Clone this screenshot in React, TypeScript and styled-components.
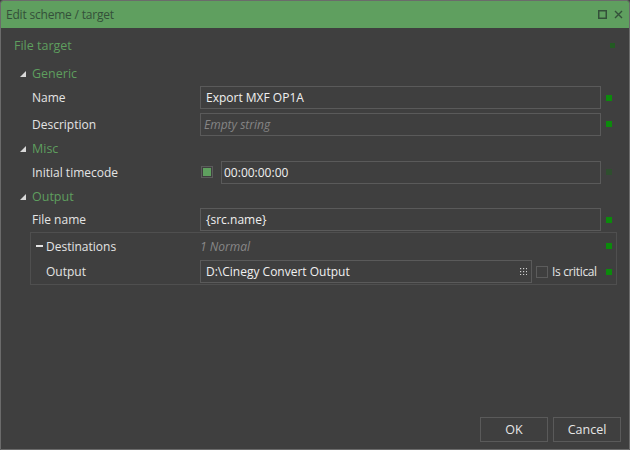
import React from "react";
import styled, { createGlobalStyle } from "styled-components";

const Global = createGlobalStyle`
  html, body { margin: 0; padding: 0; background: #3f3f3f; }
  * { box-sizing: border-box; }
  body { font-family: "Open Sans", "Noto Sans", sans-serif; font-size: 12px; }
`;

const Window = styled.div`
  width: 630px;
  height: 450px;
  border: 1px solid #6b6b6b;
  border-radius: 3px 3px 0 0;
  display: flex;
  flex-direction: column;
  overflow: hidden;
  background: #3f3f3f;
`;

const TitleBar = styled.div`
  height: 27px;
  flex: none;
  background: #5f9f5f;
  display: flex;
  align-items: center;
  justify-content: space-between;
  padding: 0 6px 0 5px;
`;

const Title = styled.span`
  color: #34503a;
  font-size: 12px;
  letter-spacing: -0.2px;
`;

const TitleIcons = styled.div`
  display: flex;
  align-items: center;
  gap: 7px;
`;

const Body = styled.div`
  flex: 1;
  display: flex;
  flex-direction: column;
  padding: 6px 12px 7px 13px;
`;

const Content = styled.div`
  flex: 1;
  display: flex;
  flex-direction: column;
`;

const SectionHeader = styled.div`
  height: 22px;
  display: flex;
  align-items: center;
  justify-content: space-between;
  color: #5e9e5e;
  font-size: 12.5px;
  margin-bottom: 6px;
`;

const Category = styled.div<{ $h?: number }>`
  height: ${(p) => p.$h ?? 22}px;
  display: flex;
  align-items: center;
  padding-left: 6px;
  gap: 6px;
  color: #5e9e5e;
  font-size: 12.5px;
`;

const Triangle = styled.span`
  width: 0;
  height: 0;
  border-left: 6px solid transparent;
  border-bottom: 6px solid #d8d8d8;
  margin-top: 1px;
`;

const PropRow = styled.div<{ $label: number; $pad: number; $h?: number }>`
  height: ${(p) => p.$h ?? 26}px;
  display: grid;
  grid-template-columns: ${(p) => p.$label}px 1fr ${(p) => 16 - (p.$pad === 15 ? 1 : 0)}px;
  align-items: center;
  padding-left: ${(p) => p.$pad}px;
`;

const Label = styled.span`
  color: #e4e4e4;
  font-size: 12px;
  display: flex;
  align-items: center;
`;

const Minus = styled.span`
  width: 7px;
  height: 2px;
  background: #e4e4e4;
  margin-left: -10px;
  margin-right: 3px;
`;

const Value = styled.div`
  display: flex;
  align-items: center;
  gap: 4px;
  min-width: 0;
`;

const Input = styled.div<{ $pad?: number; $placeholder?: boolean }>`
  flex: 1;
  height: 23px;
  border: 1px solid #5a5a5a;
  display: flex;
  align-items: center;
  justify-content: space-between;
  padding: 0 4px 0 ${(p) => p.$pad ?? 5}px;
  color: ${(p) => (p.$placeholder ? "#858585" : "#f0f0f0")};
  font-style: ${(p) => (p.$placeholder ? "italic" : "normal")};
  font-size: 12px;
  white-space: nowrap;
`;

const Hint = styled.span`
  color: #888;
  font-style: italic;
  font-size: 12px;
`;

const CheckBox = styled.span<{ $checked?: boolean }>`
  width: 12px;
  height: 12px;
  flex: none;
  border: 1px solid #5c5c5c;
  display: flex;
  align-items: center;
  justify-content: center;
  &::after {
    content: "";
    width: 8px;
    height: 8px;
    background: ${(p) => (p.$checked ? "#5fa05f" : "transparent")};
  }
`;

const CheckLabel = styled.span`
  color: #e4e4e4;
  font-size: 12px;
  letter-spacing: -0.35px;
  white-space: nowrap;
  flex: none;
  width: 49px;
`;

const Marker = styled.span<{ $tone: "on" | "dim" | "faint" }>`
  justify-self: center;
  width: ${(p) => (p.$tone === "faint" ? 5 : 6)}px;
  height: ${(p) => (p.$tone === "faint" ? 5 : 6)}px;
  background: ${(p) =>
    p.$tone === "on" ? "#0c8a0c" : p.$tone === "dim" ? "#2f4e2f" : "#235a23"};
`;

const Group = styled.div`
  margin-left: 16px;
  border: 1px solid #4f4f4f;
`;

const Footer = styled.div`
  display: flex;
  justify-content: flex-end;
  gap: 5px;
  margin-right: -4px;
`;

const Button = styled.button`
  width: 68px;
  height: 25px;
  background: #3f3f3f;
  border: 1px solid #5a5a5a;
  color: #e6e6e6;
  font-family: inherit;
  font-size: 12.5px;
  padding: 0;
`;

const GridDots = () => (
  <svg width="7" height="7" viewBox="0 0 7 7">
    {[0, 3, 6].flatMap((y) =>
      [0, 3, 6].map((x) => (
        <rect key={`${x}-${y}`} x={x} y={y} width="1.2" height="1.2" fill="#cfcfcf" />
      ))
    )}
  </svg>
);

export default function App() {
  return (
    <>
      <Global />
      <Window>
        <TitleBar>
          <Title>Edit scheme / target</Title>
          <TitleIcons>
            <svg width="9" height="9" viewBox="0 0 9 9">
              <rect x="0.75" y="0.75" width="7.5" height="7.5" fill="none" stroke="#34503a" strokeWidth="1.5" />
            </svg>
            <svg width="9" height="9" viewBox="0 0 9 9">
              <path d="M1 1 L8 8 M8 1 L1 8" stroke="#34503a" strokeWidth="1.4" />
            </svg>
          </TitleIcons>
        </TitleBar>
        <Body>
          <Content>
            <SectionHeader>
              File target
              <Marker $tone="faint" style={{ marginRight: 2 }} />
            </SectionHeader>

            <Category>
              <Triangle />
              Generic
            </Category>
            <PropRow $label={168} $pad={18} $h={27}>
              <Label>Name</Label>
              <Value>
                <Input>Export MXF OP1A</Input>
              </Value>
              <Marker $tone="on" />
            </PropRow>
            <PropRow $label={168} $pad={18}>
              <Label>Description</Label>
              <Value>
                <Input $placeholder $pad={3}>Empty string</Input>
              </Value>
              <Marker $tone="on" />
            </PropRow>

            <Category>
              <Triangle />
              Misc
            </Category>
            <PropRow $label={168} $pad={18}>
              <Label>Initial timecode</Label>
              <Value style={{ gap: 8 }}>
                <CheckBox $checked style={{ marginLeft: 1 }} />
                <Input $pad={2}>00:00:00:00</Input>
              </Value>
              <Marker $tone="dim" />
            </PropRow>

            <Category>
              <Triangle />
              Output
            </Category>
            <PropRow $label={168} $pad={18} $h={25}>
              <Label>File name</Label>
              <Value>
                <Input>{"{src.name}"}</Input>
              </Value>
              <Marker $tone="on" />
            </PropRow>

            <Group>
              <PropRow $label={154} $pad={15}>
                <Label>
                  <Minus />
                  Destinations
                </Label>
                <Hint>1 Normal</Hint>
                <Marker $tone="on" />
              </PropRow>
              <PropRow $label={154} $pad={15} $h={25}>
                <Label>Output</Label>
                <Value>
                  <Input>
                    D:\Cinegy Convert Output
                    <GridDots />
                  </Input>
                  <CheckBox />
                  <CheckLabel>Is critical</CheckLabel>
                </Value>
                <Marker $tone="on" />
              </PropRow>
            </Group>
          </Content>
          <Footer>
            <Button>OK</Button>
            <Button>Cancel</Button>
          </Footer>
        </Body>
      </Window>
    </>
  );
}
